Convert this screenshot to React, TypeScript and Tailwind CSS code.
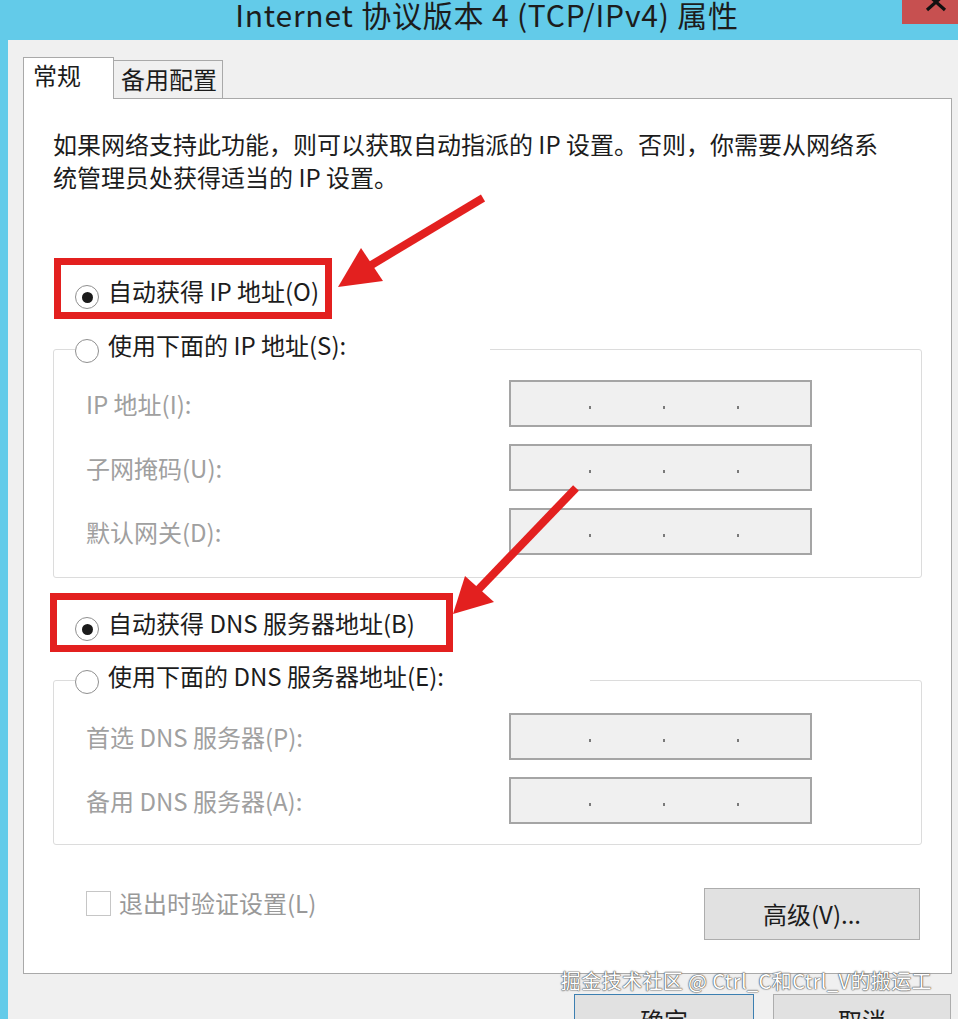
const Radio = ({ checked }: { checked?: boolean }) => (
  <span className="mt-[11px] flex h-[24px] w-[24px] shrink-0 items-center justify-center rounded-full border border-[#8f8f8f] bg-white">
    {checked && <span className="h-[11px] w-[11px] rounded-full bg-[#1b1b1b]" />}
  </span>
);

const IpBox = () => (
  <div className="flex h-[47px] w-[303px] shrink-0 items-center gap-[72px] border-2 border-[#a5a5a5] bg-[#f0f0f0] pl-[78px] pt-[8px]">
    <span className="h-[3px] w-[2px] bg-[#7a7a7a]" />
    <span className="h-[3px] w-[2px] bg-[#7a7a7a]" />
    <span className="h-[3px] w-[2px] bg-[#7a7a7a]" />
  </div>
);

const Field = ({ label }: { label: string }) => (
  <div className="flex items-center">
    <span className="w-[423px] text-[#a0a0a0]">{label}</span>
    <IpBox />
  </div>
);

export default function App() {
  return (
    <div className="relative flex h-[1019px] w-[958px] flex-col overflow-hidden bg-[#63cbe9] font-['Noto_Sans_CJK_SC',sans-serif] text-[#1c1c1c]">
      {/* title bar */}
      <div className="flex h-[40px] shrink-0 items-start">
        <div className="mt-[-1px] flex flex-1 justify-center pl-[72px] text-[30px] leading-none tracking-[0.8px]">
          Internet 协议版本 4 (TCP/IPv4) 属性
        </div>
        <div className="h-[24px] w-[56px] bg-[#c75050]">
          <svg width="56" height="24" viewBox="0 0 56 24">
            <path d="M25 -6 L43 10 M43 -6 L25 10" stroke="#111" strokeWidth="3.2" />
          </svg>
        </div>
      </div>

      {/* window body */}
      <div className="ml-[8px] flex flex-1 flex-col bg-[#f0f0f0] pl-[15px] pr-[6px] pt-[17px]">
        {/* tabs */}
        <div className="flex items-end text-[24px] leading-[34px]">
          <div className="relative z-10 -mb-px h-[42px] w-[91px] border border-b-0 border-[#a9a9a9] bg-white pl-[9px]">
            常规
          </div>
          <div className="h-[38px] w-[109px] border-r border-t border-[#a9a9a9] bg-[#f0f0f0] pl-[7px] pt-[1px]">
            备用配置
          </div>
        </div>

        {/* tab panel */}
        <div className="flex flex-col border border-[#a9a9a9] bg-white px-[29px] pb-[33px] pt-[28px] text-[24px] leading-[34px]">
          <p className="leading-[33px]">
            如果网络支持此功能，则可以获取自动指派的 IP 设置。否则，你需要从网络系
            <br />
            统管理员处获得适当的 IP 设置。
          </p>

          <div className="relative mt-[81px] flex items-start gap-[9px] pl-[22px]">
            <div className="absolute left-[1px] top-[-16px] h-[61px] w-[278px] border-[7px] border-[#e3201f]" />
            <Radio checked />
            <span>自动获得 IP 地址(O)</span>
          </div>

          <fieldset className="mt-[19px] rounded-[3px] border border-[#dcdcdc] pb-[22px] pt-[10px]">
            <legend className="ml-[21px] h-[42px] w-[415px]">
              <div className="flex items-start gap-[9px]">
                <Radio />
                <span>使用下面的 IP 地址(S):</span>
              </div>
            </legend>
            <div className="flex flex-col gap-[17px] pl-[32px]">
              <Field label="IP 地址(I):" />
              <Field label="子网掩码(U):" />
              <Field label="默认网关(D):" />
            </div>
          </fieldset>

          <div className="relative mt-[28px] flex items-start gap-[9px] pl-[22px]">
            <div className="absolute left-[-3px] top-[-13px] h-[59px] w-[403px] border-[7px] border-[#e3201f]" />
            <Radio checked />
            <span>自动获得 DNS 服务器地址(B)</span>
          </div>

          <fieldset className="mt-[18px] rounded-[3px] border border-[#dcdcdc] pb-[20px] pt-[12px]">
            <legend className="ml-[21px] h-[42px] w-[515px]">
              <div className="flex items-start gap-[9px]">
                <Radio />
                <span>使用下面的 DNS 服务器地址(E):</span>
              </div>
            </legend>
            <div className="flex flex-col gap-[17px] pl-[32px]">
              <Field label="首选 DNS 服务器(P):" />
              <Field label="备用 DNS 服务器(A):" />
            </div>
          </fieldset>

          <div className="mt-[43px] flex items-start justify-between">
            <div className="ml-[33px] mt-[-2px] flex items-start gap-[8px] text-[#999999]">
              <span className="mt-[5px] h-[25px] w-[25px] border border-[#c6c6c6] bg-white" />
              <span>退出时验证设置(L)</span>
            </div>
            <div className="mr-[2px] flex h-[52px] w-[216px] items-center justify-center border border-[#adadad] bg-[#e1e1e1]">
              高级(V)...
            </div>
          </div>
        </div>

        {/* dialog buttons */}
        <div className="mt-[20px] flex justify-end gap-[19px] pr-[1px] text-[24px] leading-[34px]">
          <div className="flex h-[52px] w-[180px] items-center justify-center border border-[#3c7fb1] bg-[#e1e1e1]">确定</div>
          <div className="flex h-[52px] w-[178px] items-center justify-center border border-[#adadad] bg-[#e1e1e1]">取消</div>
        </div>
      </div>

      {/* watermark */}
      <div className="absolute right-[26px] top-[971px] text-[20px] leading-none tracking-[0.4px] text-white [text-shadow:0_0_1px_#444,0_0_1px_#444,0_0_2px_#777]">
        掘金技术社区 @ Ctrl_C和Ctrl_V的搬运工
      </div>

      {/* annotation arrows */}
      <svg className="pointer-events-none absolute inset-0" width="958" height="1019" viewBox="0 0 958 1019">
        <line x1="483" y1="198" x2="368" y2="267" stroke="#e3201f" strokeWidth="8" />
        <polygon points="338,287 361,248 383,281" fill="#e3201f" />
        <line x1="576" y1="488" x2="476" y2="592" stroke="#e3201f" strokeWidth="8" />
        <polygon points="453,614 465,576 494,602" fill="#e3201f" />
      </svg>
    </div>
  );
}
